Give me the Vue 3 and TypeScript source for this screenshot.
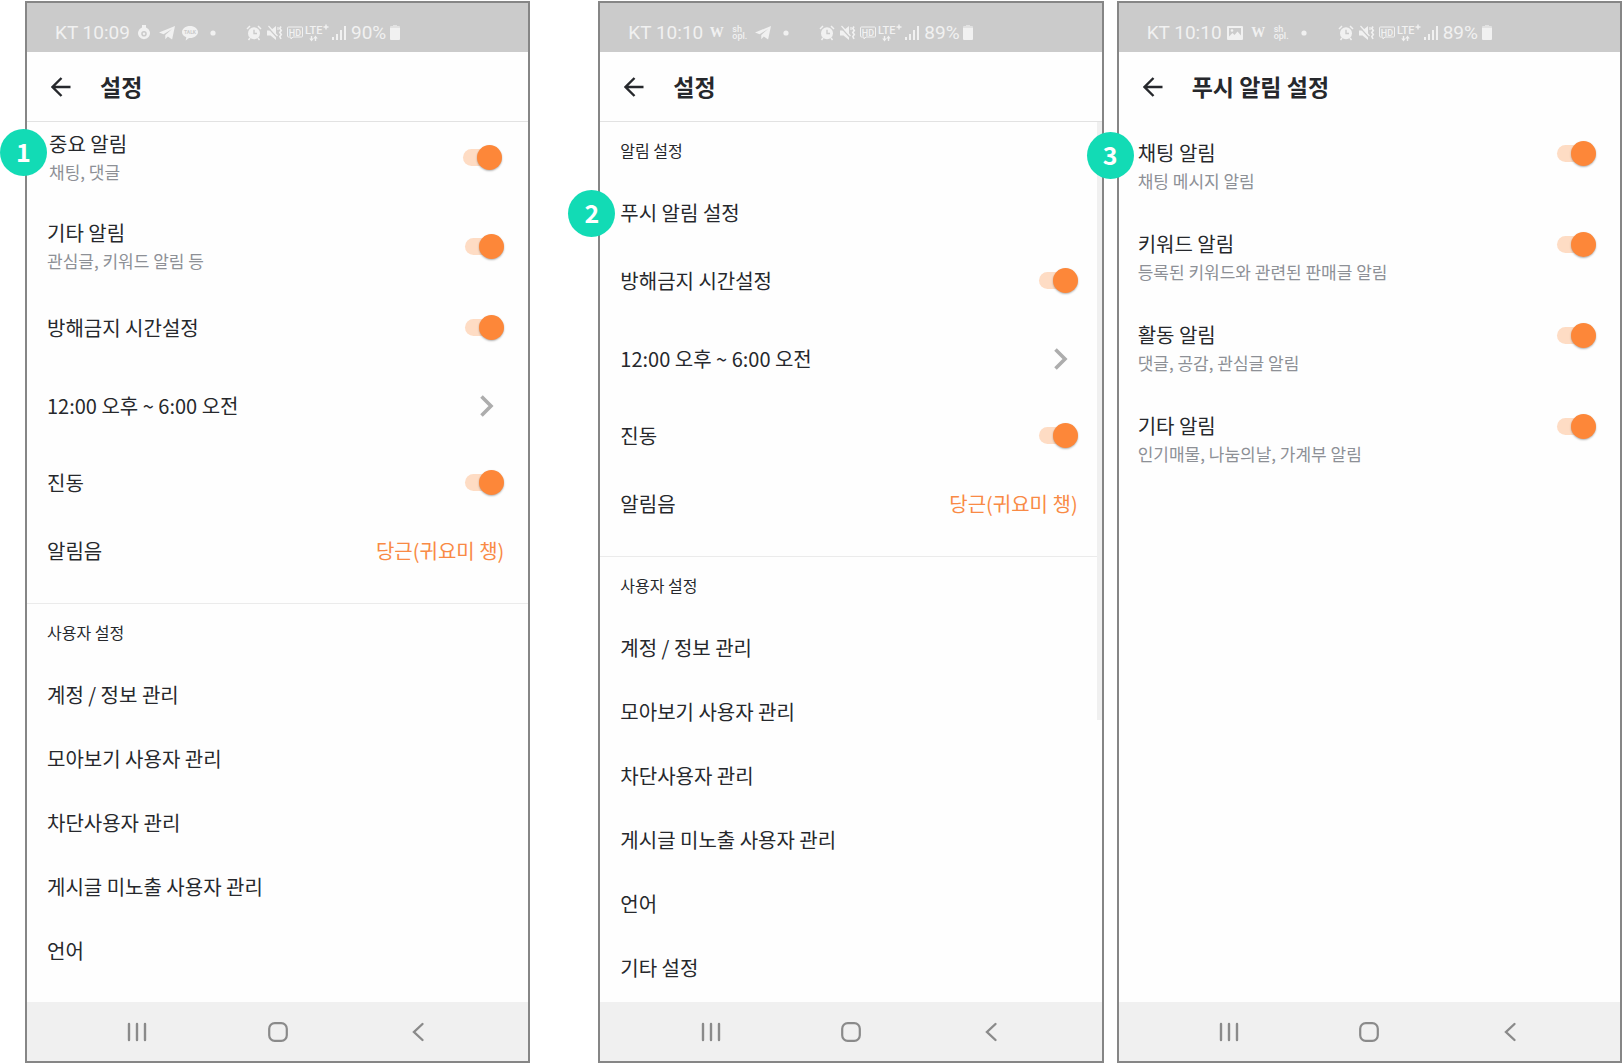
<script setup lang="ts">
import { reactive } from 'vue'

type Kind = 'switch' | 'time' | 'value' | 'link' | 'heading' | 'divider'
type StatusIcon = 'ring' | 'plane' | 'talk' | 'dot' | 'w' | 'shop' | 'image'

interface Row {
  kind: Kind
  label?: string
  sub?: string
  value?: string
  on?: boolean
  badge?: number
  lead?: boolean
}

interface Phone {
  id: string
  time: string
  battery: string
  icons: StatusIcon[]
  title: string
  ruled: boolean
  scrollbar: boolean
  rows: Row[]
}

const phones = reactive<Phone[]>([
  {
    id: 'before',
    time: '10:09',
    battery: '90%',
    icons: ['ring', 'plane', 'talk', 'dot'],
    title: '설정',
    ruled: true,
    scrollbar: false,
    rows: [
      { kind: 'switch', label: '중요 알림', sub: '채팅, 댓글', on: true, badge: 1, lead: true },
      { kind: 'switch', label: '기타 알림', sub: '관심글, 키워드 알림 등', on: true },
      { kind: 'switch', label: '방해금지 시간설정', on: true },
      { kind: 'time', label: '12:00 오후 ~ 6:00 오전' },
      { kind: 'switch', label: '진동', on: true },
      { kind: 'value', label: '알림음', value: '당근(귀요미 챙)' },
      { kind: 'divider' },
      { kind: 'heading', label: '사용자 설정' },
      { kind: 'link', label: '계정 / 정보 관리' },
      { kind: 'link', label: '모아보기 사용자 관리' },
      { kind: 'link', label: '차단사용자 관리' },
      { kind: 'link', label: '게시글 미노출 사용자 관리' },
      { kind: 'link', label: '언어' },
    ],
  },
  {
    id: 'after',
    time: '10:10',
    battery: '89%',
    icons: ['w', 'shop', 'plane', 'dot'],
    title: '설정',
    ruled: true,
    scrollbar: true,
    rows: [
      { kind: 'heading', label: '알림 설정' },
      { kind: 'link', label: '푸시 알림 설정', badge: 2 },
      { kind: 'switch', label: '방해금지 시간설정', on: true },
      { kind: 'time', label: '12:00 오후 ~ 6:00 오전' },
      { kind: 'switch', label: '진동', on: true },
      { kind: 'value', label: '알림음', value: '당근(귀요미 챙)' },
      { kind: 'divider' },
      { kind: 'heading', label: '사용자 설정' },
      { kind: 'link', label: '계정 / 정보 관리' },
      { kind: 'link', label: '모아보기 사용자 관리' },
      { kind: 'link', label: '차단사용자 관리' },
      { kind: 'link', label: '게시글 미노출 사용자 관리' },
      { kind: 'link', label: '언어' },
      { kind: 'link', label: '기타 설정' },
    ],
  },
  {
    id: 'push',
    time: '10:10',
    battery: '89%',
    icons: ['image', 'w', 'shop', 'dot'],
    title: '푸시 알림 설정',
    ruled: false,
    scrollbar: false,
    rows: [
      { kind: 'switch', label: '채팅 알림', sub: '채팅 메시지 알림', on: true, badge: 3 },
      { kind: 'switch', label: '키워드 알림', sub: '등록된 키워드와 관련된 판매글 알림', on: true },
      { kind: 'switch', label: '활동 알림', sub: '댓글, 공감, 관심글 알림', on: true },
      { kind: 'switch', label: '기타 알림', sub: '인기매물, 나눔의날, 가계부 알림', on: true },
    ],
  },
])
</script>

<template>
  <main class="board">
    <section v-for="phone in phones" :key="phone.id" class="phone" :class="`phone--${phone.id}`">
      <div class="status">
        <span class="status__time">KT {{ phone.time }}</span>
        <span v-for="icon in phone.icons" :key="icon" class="status__slot">
          <svg v-if="icon === 'ring'" width="14" height="16" viewBox="0 0 14 16">
            <path fill="currentColor" fill-rule="evenodd" d="M5 0h4v2.600a6 6 0 1 1-4 0zM7 6a2.800 2.800 0 1 0 0 5.600a2.800 2.800 0 0 0 0-5.600z" />
            <circle cx="7" cy="8.800" r="1.200" fill="currentColor" />
          </svg>
          <svg v-else-if="icon === 'plane'" width="16" height="14" viewBox="0 0 16 14">
            <path fill="currentColor" d="M16 0L0 6.500l4.600 1.700L13 3L6.300 9v4.200l2.500-2.600l4.300 3z" />
          </svg>
          <svg v-else-if="icon === 'talk'" width="16" height="16" viewBox="0 0 16 16">
            <path fill="currentColor" d="M8 1c4.400 0 8 2.700 8 6s-3.600 6-8 6l-1 0l-3.300 2.500l.6-3.200C1.700 11.300 0 9.300 0 7c0-3.300 3.600-6 8-6z" />
            <text x="8" y="9" text-anchor="middle" class="talk-text">TALK</text>
          </svg>
          <svg v-else-if="icon === 'image'" width="16" height="14" viewBox="0 0 16 14">
            <path fill="currentColor" fill-rule="evenodd" d="M1 0h14a1 1 0 0 1 1 1v12a1 1 0 0 1-1 1H1a1 1 0 0 1-1-1V1a1 1 0 0 1 1-1zM2 2v8.500l3.500-3.500l2 2l3-3.500l3.500 4V2z" />
            <circle cx="5" cy="4.500" r="1.300" fill="currentColor" />
          </svg>
          <span v-else-if="icon === 'w'" class="status__w">W</span>
          <span v-else-if="icon === 'shop'" class="status__shop">sh<br />opl.</span>
          <svg v-else width="6" height="6" viewBox="0 0 6 6"><circle cx="3" cy="3" r="2.600" fill="currentColor" /></svg>
        </span>
        <span class="status__system">
          <svg width="16" height="16" viewBox="0 0 16 16">
            <path d="M1 4L4 1M15 4L12 1M4 13l-1.500 2M12 13l1.500 2" fill="none" stroke="currentColor" stroke-width="1.500" />
            <circle cx="8" cy="8.300" r="6" fill="currentColor" />
            <path d="M8 4.800v3.700h3" fill="none" stroke="#cbcbcb" stroke-width="1.400" />
          </svg>
          <svg class="status__mute" width="16" height="16" viewBox="0 0 16 16">
            <path fill="currentColor" d="M0 5.500h3.500L9 1v14L3.500 10.500H0z" />
            <path d="M0 1.500l11 12" stroke="#cbcbcb" stroke-width="1.500" />
            <path d="M1.500 1l9 10M11 2v3" stroke="currentColor" stroke-width="1.200" />
            <path d="M14 1.500l-1.200 2l1.500 2l-1.500 2l1.500 2l-1.500 2l1.200 2.500" fill="none" stroke="currentColor" stroke-width="1.600" />
          </svg>
          <svg class="status__hd" width="16" height="16" viewBox="0 0 16 16">
            <path d="M1.500 2h13q1 0 1 1v8q0 1-1 1H6l-2 2v-2H1.500q-1 0-1-1V3q0-1 1-1z" fill="none" stroke="currentColor" />
            <text x="8" y="10.500" text-anchor="middle" class="hd-text">HD</text>
          </svg>
          <svg class="status__lte" width="24" height="18" viewBox="0 0 24 18">
            <text x="0" y="10" class="lte-text">LTE</text>
            <path d="M18.500 3h5M21 .5v5" stroke="currentColor" stroke-width="1.400" />
            <path d="M6.500 12v4M10.500 17v-4" stroke="currentColor" stroke-width="1.400" />
            <path d="M4.300 14.500h4.400l-2.200 3zM8.300 14.500h4.400l-2.200-3z" fill="currentColor" />
          </svg>
          <svg class="status__signal" width="14" height="15" viewBox="0 0 14 15">
            <path fill="currentColor" d="M0 12h2v3H0zM4 9h2v6H4zM8 5h2v10H8zM12 1h2v14h-2z" />
          </svg>
          <span class="status__percent">{{ phone.battery }}</span>
          <svg width="10" height="15" viewBox="0 0 10 15">
            <path fill="currentColor" opacity=".6" d="M3 0h4v1h2q1 0 1 1v1H0V2q0-1 1-1h2z" />
            <path fill="currentColor" d="M0 3h10v11q0 1-1 1H1q-1 0-1-1z" />
          </svg>
        </span>
      </div>

      <header class="bar" :class="{ 'bar--ruled': phone.ruled }">
        <button type="button" class="bar__back" aria-label="뒤로">
          <svg width="20" height="20" viewBox="0 0 20 20">
            <path d="M19.500 10H1.500M10.500 1L1.500 10l9 9" fill="none" stroke="currentColor" stroke-width="2.400" />
          </svg>
        </button>
        <h1 class="bar__title">{{ phone.title }}</h1>
      </header>

      <div class="content">
        <template v-for="(row, i) in phone.rows" :key="i">
          <hr v-if="row.kind === 'divider'" class="divider" />
          <h2 v-else-if="row.kind === 'heading'" class="heading">{{ row.label }}</h2>
          <div
            v-else
            class="row"
            :class="[`row--${row.kind}`, { 'row--double': row.sub, 'row--lead': row.lead }]"
          >
            <span v-if="row.badge" class="badge">{{ row.badge }}</span>
            <template v-if="row.kind === 'switch'">
              <label class="row__text" :for="`${phone.id}-${i}`">
                <span class="row__label">{{ row.label }}</span>
                <span v-if="row.sub" class="row__sub">{{ row.sub }}</span>
              </label>
              <input :id="`${phone.id}-${i}`" v-model="row.on" type="checkbox" role="switch" class="toggle" />
            </template>
            <button v-else type="button" class="row__action">
              <span class="row__label">{{ row.label }}</span>
              <span v-if="row.kind === 'value'" class="row__value">{{ row.value }}</span>
              <svg v-if="row.kind === 'time'" class="row__chevron" width="14" height="22" viewBox="0 0 14 22">
                <path d="M1.500 1.500L11 11l-9.500 9.500" fill="none" stroke="currentColor" stroke-width="3.600" />
              </svg>
            </button>
          </div>
        </template>
        <span v-if="phone.scrollbar" class="scrollbar"></span>
      </div>

      <nav class="nav">
        <button type="button" aria-label="최근 앱">
          <svg width="20" height="20" viewBox="0 0 20 20">
            <path d="M2 2v16M10 2v16M18 2v16" fill="none" stroke="currentColor" stroke-width="2.400" stroke-linecap="round" />
          </svg>
        </button>
        <button type="button" aria-label="홈">
          <svg width="20" height="20" viewBox="0 0 20 20">
            <rect x="1.200" y="1.200" width="17.600" height="17.600" rx="5.500" fill="none" stroke="currentColor" stroke-width="2.200" />
          </svg>
        </button>
        <button type="button" aria-label="뒤로 가기">
          <svg width="20" height="20" viewBox="0 0 20 20">
            <path d="M14.500 2L6 10l8.500 8" fill="none" stroke="currentColor" stroke-width="2.400" stroke-linecap="round" />
          </svg>
        </button>
      </nav>
    </section>
  </main>
</template>

<style>
body {
  background: #fff;
}
</style>

<style scoped>
.board {
  box-sizing: border-box;
  display: flex;
  min-height: 100vh;
  padding: 1px 0 0 25px;
  font-family: 'Noto Sans CJK KR', 'Noto Sans', sans-serif;
  color: #26282c;
}

.phone {
  box-sizing: border-box;
  flex: 1 1 0;
  min-width: 0;
  display: flex;
  flex-direction: column;
  border: 2px solid #868686;
  background: #fefefe;
}

.phone--after {
  margin-left: 68px;
}

.phone--push {
  margin-left: 13px;
}

button {
  margin: 0;
  padding: 0;
  border: 0;
  background: none;
  font: inherit;
  color: inherit;
  cursor: pointer;
}

svg {
  display: block;
  flex: none;
}

/* Status bar */
.status {
  display: flex;
  align-items: center;
  height: 39px;
  padding: 10px 0 0 28px;
  background: #cbcbcb;
  color: #f1f1f1;
  font-family: Roboto, sans-serif;
  font-size: 19px;
  font-weight: 400;
  line-height: 24px;
  white-space: nowrap;
}

.status__time {
  width: 77px;
}

.status__slot {
  display: flex;
  justify-content: center;
  width: 23px;
}

.status__w {
  font: 700 14px/16px 'Liberation Serif', serif;
}

.status__shop {
  font: 500 9px/7px Roboto, sans-serif;
}

.status__system {
  display: flex;
  align-items: center;
  margin-left: 22px;
}

.status__mute {
  margin-left: 5px;
}

.status__hd {
  margin-left: 4px;
}

.status__lte {
  margin-left: 2px;
}

.status__signal {
  margin-left: 3px;
}

.status__percent {
  width: 40px;
  padding-left: 5px;
  box-sizing: border-box;
  margin-right: 4px;
}

.talk-text {
  font: 700 5px Roboto, sans-serif;
  fill: #cbcbcb;
}

.hd-text {
  font: 500 9px Roboto, sans-serif;
  fill: currentColor;
}

.lte-text {
  font: 500 11px Roboto, sans-serif;
  fill: currentColor;
}

/* App bar */
.bar {
  box-sizing: border-box;
  display: flex;
  align-items: center;
  gap: 29px;
  height: 70px;
  padding-left: 24px;
  border-bottom: 1px solid transparent;
}

.bar--ruled {
  border-bottom-color: #e2e2e2;
}

.bar__title {
  margin: 0;
  padding-bottom: 2px;
  font-size: 23px;
  font-weight: 700;
  line-height: 32px;
}

/* Settings list */
.content {
  position: relative;
  flex: 1;
}

.phone--push .content {
  padding-top: 17px;
}

.heading {
  margin: 0;
  padding: 0 0 2px 20px;
  font-size: 16px;
  font-weight: 400;
  line-height: 57px;
}

.divider {
  height: 1px;
  margin: 20px 0 0;
  border: 0;
  background: #ebebeb;
}

.row {
  position: relative;
  box-sizing: border-box;
  display: flex;
  align-items: center;
  justify-content: space-between;
  min-height: 64px;
  padding: 0 24px 0 20px;
}

.row--switch {
  min-height: 72px;
}

.row--time {
  min-height: 83px;
}

.row--double {
  min-height: 90px;
}

.row--lead {
  min-height: 80px;
  padding: 0 26px 9px 22px;
}

.phone--push .row {
  align-items: flex-start;
  min-height: 91px;
  padding-left: 19px;
}

.row__text {
  display: flex;
  flex-direction: column;
}

.row__label,
.row__value {
  font-size: 20px;
  line-height: 28px;
}

.row__sub {
  font-size: 17px;
  line-height: 28px;
  color: #8d9096;
}

.row__action {
  flex: 1;
  display: flex;
  align-items: center;
  justify-content: space-between;
  text-align: left;
}

.row__value {
  color: #f98a45;
}

.row__chevron {
  margin-right: 10px;
  color: #adadad;
}

.toggle {
  appearance: none;
  position: relative;
  width: 39px;
  height: 30px;
  margin: 0;
  cursor: pointer;
}

.toggle::before {
  content: '';
  position: absolute;
  top: 6px;
  left: 0;
  width: 36px;
  height: 17px;
  border-radius: 9px;
  background: #fedcc4;
}

.toggle::after {
  content: '';
  position: absolute;
  top: 2px;
  left: 0;
  width: 25px;
  height: 25px;
  border-radius: 50%;
  background: #fd8739;
  box-shadow: 0 1px 2px rgba(0, 0, 0, 0.3);
}

.toggle:checked::after {
  left: 14px;
}

.badge {
  position: absolute;
  top: 7px;
  left: -27px;
  width: 47px;
  height: 47px;
  border-radius: 50%;
  background: #12dbb5;
  color: #fff;
  font-size: 25px;
  font-weight: 700;
  line-height: 44px;
  text-align: center;
}

.phone--after .badge {
  top: 9px;
  left: -32px;
}

.phone--push .badge {
  top: -7px;
  left: -32px;
}

.scrollbar {
  position: absolute;
  top: 0;
  right: 0;
  width: 5px;
  height: 68%;
  background: #f0f0f0;
}

/* System navigation */
.nav {
  display: grid;
  grid-template-columns: repeat(3, 1fr);
  height: 59px;
  padding: 0 40px;
  background: #f0f0f0;
  color: #8a8a8a;
}

.nav button {
  display: flex;
  align-items: center;
  justify-content: center;
}
</style>
